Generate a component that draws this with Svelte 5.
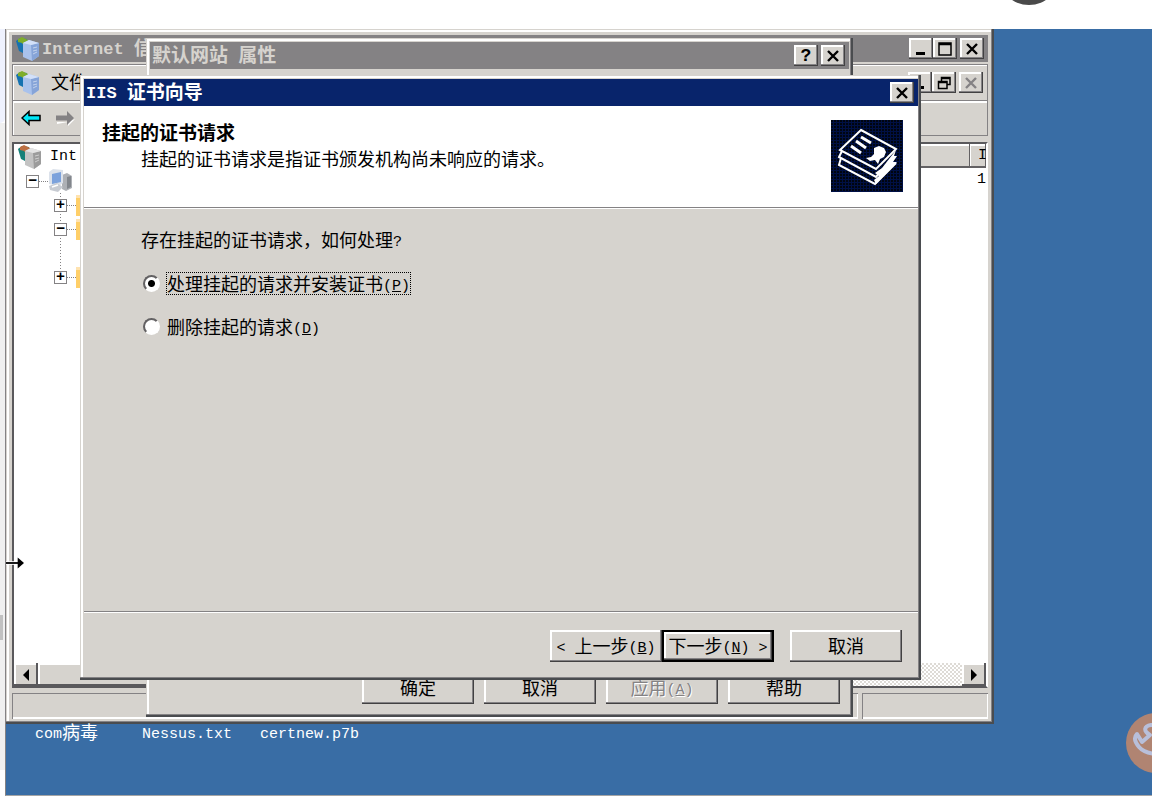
<script lang="ts">
	type TreeNode = { id: number; open: boolean; tall?: boolean };

	const folders: TreeNode[] = [
		{ id: 1, open: false },
		{ id: 2, open: true, tall: true },
		{ id: 3, open: false }
	];
	const desktopFiles = [
		{ latin: 'com', cjk: '病毒' },
		{ latin: 'Nessus.txt', cjk: '' },
		{ latin: 'certnew.p7b', cjk: '' }
	];

	let choice = $state('process');
</script>

{#snippet cross()}
	<svg class="glyph" viewBox="0 0 14 14" aria-hidden="true">
		<path d="M2 2L12 12M12 2L2 12" stroke="currentColor" stroke-width="2.4" />
	</svg>
{/snippet}

{#snippet server(color: string)}
	<svg class="server" viewBox="0 0 24 24" aria-hidden="true">
		<path d="M0 4l4-3 7 1 2 11-4 4-6-3z" fill={color === 'blue' ? '#1572b0' : '#158078'} />
		<path d="M2 2l4-2 6 3-1 5-3 1-2-3-4-1z" fill={color === 'blue' ? '#7fae2b' : '#bd7043'} />
		<path d="M7 6l6-3 10 3v13l-7 5-9-4z" fill={color === 'blue' ? '#a9c2ec' : '#c3c3c3'} />
		<path d="M15 8l8-2v13l-7 5z" fill={color === 'blue' ? '#86a4d8' : '#9c9c9c'} />
		<path d="M7 6l6-3 10 3-8 2z" fill={color === 'blue' ? '#d3e0f8' : '#e4e4e4'} />
		<path d="M17 11l4-1M17 14l4-1M17 17l4-2" stroke="#fff" stroke-width="1" opacity="0.5" />
	</svg>
{/snippet}

<div class="page">
	<header class="page-top">
		<svg class="page-dot" viewBox="0 0 36 5" aria-hidden="true">
			<circle cx="18" cy="-26" r="31" fill="#4a4a4a" />
		</svg>
	</header>

	<div class="page-side">
		<div class="side-tint"></div>
		<div class="side-track"><div class="side-thumb"></div></div>
	</div>

	<main class="desktop">
		<section class="window console">
			<div class="titlebar inactive console-title">
				{@render server('blue')}
				<h2><span class="latin-bold">{'Internet '}</span>信</h2>
				<div class="title-buttons">
					<button type="button" class="caption" aria-label="最小化">
						<svg class="glyph" viewBox="0 0 14 14"><path d="M2 11.5h9" stroke="#000" stroke-width="3" /></svg>
					</button>
					<button type="button" class="caption" aria-label="最大化">
						<svg class="glyph" viewBox="0 0 14 14"><path d="M1 1h12v12H1zM1 2.5h12" fill="none" stroke="#000" stroke-width="1.5" /></svg>
					</button>
					<button type="button" class="caption apart" aria-label="关闭">{@render cross()}</button>
				</div>
			</div>

			<div class="rebar">
				<div class="menu-row">
					{@render server('blue')}
					<span>文件</span>
					<div class="mdi-buttons">
						<button type="button" class="caption" aria-label="最小化">
							<svg class="glyph" viewBox="0 0 14 14"><path d="M2 11.5h9" stroke="#000" stroke-width="3" /></svg>
						</button>
						<button type="button" class="caption" aria-label="还原">
							<svg class="glyph" viewBox="0 0 14 14">
								<path d="M4.5 5V1.5H13V8.5H10M4.5 2.5H13M1.5 5.5H10V12.5H1.5zM1.5 6.5H10" fill="none" stroke="#000" stroke-width="1.5" />
							</svg>
						</button>
						<button type="button" class="caption apart muted" aria-label="关闭" disabled>{@render cross()}</button>
					</div>
				</div>
				<div class="tool-row">
					<svg class="arrow" viewBox="0 0 20 16" aria-hidden="true">
						<path d="M1 8L8 1.5V5.5H19V10.5H8V14.5z" fill="#00e8f8" stroke="#000" stroke-width="1.5" />
					</svg>
					<svg class="arrow" viewBox="0 0 20 16" aria-hidden="true">
						<path d="M20 9L13 16V12H2V14L13 12z" fill="#fff" />
						<path d="M19 8L12 1V5.5H1V10.5H12V15z" fill="#848284" />
					</svg>
				</div>
			</div>

			<div class="console-body">
				<div class="panes">
					<div class="tree">
						<div class="tree-root">
							{@render server('grey')}
							<span class="latin">Int</span>
						</div>
						<div class="tree-row computer-row">
							<span class="box">−</span><span class="dots"></span>
							<svg class="server" viewBox="0 0 24 24" aria-hidden="true">
								<path d="M14 6l5-2 5 3v12l-6 3-4-2z" fill="#adb0b5" />
								<path d="M19 8l4-1v11l-4 2z" fill="#82868c" />
								<path d="M1 3l4-3 10 1v13l-4 3-10-2z" fill="#dce2eb" />
								<path d="M4 5l9-2v10l-9 2z" fill="#7ca2dc" />
								<path d="M1 17l8-3 6 4-5 5-8-2z" fill="#c7cbd2" />
								<path d="M4 18l6-2" stroke="#fff" stroke-width="1.5" />
							</svg>
						</div>
						<div class="branch">
							{#each folders as node (node.id)}
								<div class="tree-row" class:tall={node.tall}>
									<span class="box">{node.open ? '−' : '+'}</span><span class="dots"></span>
									<span class="folder"></span>
								</div>
							{/each}
						</div>
					</div>
					<div class="list">
						<div class="list-head">
							<span class="column"></span>
							<span class="column last latin">I</span>
						</div>
						<div class="list-row latin">1</div>
					</div>
				</div>
				<div class="scrollbar">
					<button type="button" class="scroll-button" aria-label="向左">
						<svg viewBox="0 0 8 12"><path d="M7 0v12L1 6z" /></svg>
					</button>
					<div class="scroll-thumb"></div>
					<div class="scroll-track"></div>
					<button type="button" class="scroll-button" aria-label="向右">
						<svg viewBox="0 0 8 12"><path d="M1 0v12l6-6z" /></svg>
					</button>
				</div>
			</div>
			<div class="status">
				<div class="status-cell"></div>
				<div class="status-cell short"></div>
			</div>
		</section>

		<section class="window properties">
			<div class="titlebar inactive">
				<h2>默认网站<span class="latin-bold">{' '}</span>属性</h2>
				<div class="title-buttons">
					<button type="button" class="caption help" aria-label="帮助">?</button>
					<button type="button" class="caption apart" aria-label="关闭">{@render cross()}</button>
				</div>
			</div>
			<div class="sheet-buttons">
				<button type="button" class="push">确定</button>
				<button type="button" class="push">取消</button>
				<button type="button" class="push" disabled>应用<span class="latin">(<u>A</u>)</span></button>
				<button type="button" class="push">帮助</button>
			</div>
		</section>

		<section class="window wizard">
			<div class="titlebar active">
				<h1><span class="latin-bold">{'IIS '}</span>证书向导</h1>
				<div class="title-buttons">
					<button type="button" class="caption" aria-label="关闭">{@render cross()}</button>
				</div>
			</div>
			<div class="banner">
				<div class="banner-text">
					<h2>挂起的证书请求</h2>
					<p>挂起的证书请求是指证书颁发机构尚未响应的请求。</p>
				</div>
				<svg class="certificate" viewBox="0 0 72 72" aria-hidden="true">
					<defs>
						<pattern id="weave" width="3" height="3" patternUnits="userSpaceOnUse">
							<rect width="3" height="3" fill="#001045" />
							<rect width="2" height="2" fill="#000510" />
						</pattern>
					</defs>
					<rect width="72" height="72" fill="url(#weave)" />
					<path d="M51 48L65 30L63 36L66 36L62 42L66 42L45 64L43 60L48 56L44 53z" fill="#fff" />
					<g fill="none" stroke="#fff" stroke-width="2">
						<path d="M30 10L65 29L45 49L9 30z" />
						<path d="M11 31L8 37L45 57L50 51" />
						<path d="M10 38L8 45L44 64L65 43" />
					</g>
					<g stroke="#fff" stroke-width="3">
						<path d="M30 17L40 23M25 21L35 28M20 26L30 33" />
					</g>
					<path d="M43 28l5-2 5 2 2 4-2 5-4 2-2 5-3-4-5 1-4-3 5-1 3-3z" fill="#fff" />
				</svg>
			</div>
			<div class="wizard-body">
				<p id="question">存在挂起的证书请求，如何处理<span class="latin">?</span></p>
				<div class="options" role="radiogroup" aria-labelledby="question">
					<label class="option">
						<input type="radio" name="pending" value="process" bind:group={choice} />
						<span class="option-text" class:focused={choice === 'process'}>处理挂起的请求并安装证书<span class="latin">(<u>P</u>)</span></span>
					</label>
					<label class="option">
						<input type="radio" name="pending" value="delete" bind:group={choice} />
						<span class="option-text" class:focused={choice === 'delete'}>删除挂起的请求<span class="latin">(<u>D</u>)</span></span>
					</label>
				</div>
			</div>
			<div class="wizard-buttons">
				<button type="button" class="push"><span class="latin">{'< '}</span>上一步<span class="latin">(<u>B</u>)</span></button>
				<button type="button" class="push default">下一步<span class="latin">(<u>N</u>) &gt;</span></button>
				<button type="button" class="push cancel">取消</button>
			</div>
		</section>

		<div class="desktop-files">
			{#each desktopFiles as file (file.latin)}
				<span><span class="latin">{file.latin}</span>{file.cjk}</span>
			{/each}
		</div>

		<svg class="resize-cursor" viewBox="0 0 20 14" aria-hidden="true">
			<path d="M0 7H14" stroke="#fff" stroke-width="4" />
			<path d="M0 7H14" stroke="#000" stroke-width="2" />
			<path d="M13 1L20 7L13 13z" fill="#000" />
		</svg>

		<button type="button" class="floating" aria-label="工具">
			<svg viewBox="0 0 40 40" aria-hidden="true">
				<path d="M40 29C27 33 13 31 7 24C2 18 2 14 5 11L10 19L18 12C11 8 12 3 19 2C26 1 31 6 33 12L24 20" fill="none" stroke="#b8bfda" stroke-width="4" stroke-linejoin="round" />
			</svg>
		</button>
	</main>
</div>

<style>
	:global(body) {
		margin: 0;
		background: #ffffff;
	}

	.page {
		height: 100vh;
		min-height: 760px;
		display: grid;
		grid-template-columns: 5px 1fr;
		grid-template-rows: 29px 1fr 2px;
		overflow: hidden;
		font-family: 'Noto Sans CJK SC', sans-serif;
		font-size: 18px;
		line-height: 24px;
		color: #000000;
	}

	h1,
	h2,
	p {
		margin: 0;
		font-weight: 400;
		white-space: nowrap;
	}

	button {
		font: inherit;
		color: inherit;
		padding: 0;
		border: none;
		background: #d6d3ce;
	}

	.latin {
		font-family: 'Liberation Mono', monospace;
		font-size: 15px;
		line-height: 15px;
		vertical-align: 1px;
		white-space: pre;
	}

	.latin-bold {
		font-family: 'Liberation Mono', monospace;
		font-size: 17px;
		line-height: 17px;
		vertical-align: 1px;
		white-space: pre;
	}

	.page-top {
		grid-column: 1 / -1;
		display: flex;
		justify-content: flex-end;
		padding-right: 105px;
	}

	.page-dot {
		width: 36px;
		height: 5px;
	}

	.page-side {
		display: flex;
		flex-direction: column;
		padding-bottom: 26px;
	}

	.side-tint {
		height: 94px;
		background: #eff2fe;
		border-radius: 0 0 5px 0;
	}

	.side-track {
		flex: 1;
		padding-top: 492px;
		background: #f0f0f0;
	}

	.side-thumb {
		width: 3px;
		height: 25px;
		background: #c1c1c1;
	}

	.desktop {
		position: relative;
		background: #396da5;
		border-left: 1px solid #848284;
		border-bottom: 1px solid #a5a5a5;
		overflow: hidden;
	}

	.window {
		position: absolute;
		box-sizing: border-box;
		display: flex;
		flex-direction: column;
		background: #d6d3ce;
		box-shadow:
			inset -2px -2px 0 #4a4c4f,
			inset -3px -3px 0 #848284,
			inset 1px 1px 0 #d6d3ce,
			inset 3px 3px 0 #ffffff;
		overflow: hidden;
	}

	.titlebar {
		display: flex;
		align-items: center;
		height: 27px;
		flex-shrink: 0;
		padding: 0 4px 0 2px;
	}

	.titlebar h1,
	.titlebar h2 {
		padding-bottom: 4px;
		font-size: 19px;
		font-weight: 700;
	}

	.inactive {
		background: #848284;
		color: #d6d3ce;
	}

	.active {
		background: #08246b;
		color: #ffffff;
	}

	.title-buttons,
	.mdi-buttons {
		display: flex;
		margin-left: auto;
	}

	.caption {
		display: flex;
		align-items: center;
		justify-content: center;
		width: 24px;
		height: 21px;
		color: #000000;
		box-shadow:
			inset -1px -1px 0 #424142,
			inset -2px -2px 0 #848284,
			inset 2px 2px 0 #ffffff;
	}

	.apart {
		margin-left: 3px;
	}

	.muted {
		color: #848284;
	}

	.help {
		font-family: 'Liberation Mono', monospace;
		font-weight: 700;
	}

	.glyph {
		width: 14px;
		height: 14px;
	}

	.server {
		width: 24px;
		height: 24px;
		flex-shrink: 0;
	}

	.console {
		top: 0;
		left: 0;
		right: 158px;
		bottom: 71px;
		padding: 6px 6px 5px;
	}

	.console-title {
		padding-left: 4px;
	}

	.console-title h2 {
		padding-left: 2px;
	}

	.rebar {
		margin-top: 2px;
		border: 1px solid #848284;
		box-shadow: inset 1px 1px 0 #ffffff;
	}

	.menu-row {
		display: flex;
		align-items: center;
		height: 35px;
		padding: 0 4px 0 3px;
		border-bottom: 1px solid #848284;
	}

	.menu-row > span {
		padding: 0 0 3px 11px;
	}

	.tool-row {
		display: flex;
		align-items: center;
		gap: 14px;
		height: 34px;
		padding-left: 8px;
		box-shadow: inset 1px 2px 0 #ffffff;
	}

	.arrow {
		width: 20px;
		height: 16px;
	}

	.console-body {
		flex: 1;
		display: flex;
		flex-direction: column;
		min-height: 0;
		margin-top: 6px;
		border: 2px solid #5a595c;
		border-right-color: #ffffff;
	}

	.panes {
		flex: 1;
		display: flex;
		min-height: 0;
		background: #ffffff;
	}

	.tree {
		flex: 1;
		padding-left: 4px;
	}

	.tree-root {
		display: flex;
		align-items: center;
		gap: 8px;
		height: 25px;
	}

	.tree-row {
		display: flex;
		align-items: center;
		height: 24px;
	}

	.computer-row {
		padding-left: 8px;
	}

	.branch {
		width: 64px;
		padding-left: 36px;
		overflow: hidden;
	}

	.tree-row.tall {
		padding-bottom: 24px;
	}

	.branch .tree-row {
		background: repeating-linear-gradient(#848284 0 1px, #ffffff 1px 3px) 6px 0 / 1px 100% no-repeat;
	}

	.branch .tree-row:last-child {
		background-size: 1px 12px;
	}

	.box {
		box-sizing: border-box;
		width: 13px;
		height: 13px;
		flex-shrink: 0;
		border: 1px solid #848284;
		background: #ffffff;
		font-family: 'Liberation Mono', monospace;
		font-size: 15px;
		font-weight: 700;
		line-height: 11px;
		text-align: center;
	}

	.dots {
		width: 9px;
		flex-shrink: 0;
		border-top: 1px dotted #848284;
	}

	.folder {
		width: 24px;
		height: 18px;
		flex-shrink: 0;
		background: #ffcf68;
		border-top: 3px solid #ffe3b0;
	}

	.list {
		width: 110px;
		overflow: hidden;
	}

	.list-head {
		display: flex;
		height: 24px;
	}

	.column {
		box-sizing: border-box;
		flex: 1;
		background: #d6d3ce;
		box-shadow:
			inset -1px -2px 0 #636163,
			inset 1px 2px 0 #ffffff;
	}

	.column.last {
		flex: 0 0 16px;
		padding-left: 8px;
		line-height: 24px;
		overflow: hidden;
	}

	.list-row {
		line-height: 24px;
		text-align: right;
	}

	.scrollbar {
		display: flex;
		height: 23px;
	}

	.scroll-button,
	.scroll-thumb {
		background: #d6d3ce;
		box-shadow:
			inset -2px -2px 0 #5a595c,
			inset 2px 2px 0 #ffffff;
	}

	.scroll-button {
		display: flex;
		align-items: center;
		justify-content: center;
		width: 24px;
	}

	.scroll-button svg {
		width: 8px;
		height: 12px;
	}

	.scroll-thumb {
		width: 400px;
	}

	.scroll-track {
		flex: 1;
		background: repeating-conic-gradient(#ffffff 0 25%, #dedbd6 0 50%) 0 0 / 4px 4px;
	}

	.status {
		display: flex;
		gap: 4px;
		height: 26px;
		margin-top: 5px;
	}

	.status-cell {
		flex: 1;
		box-shadow:
			inset 1px 1px 0 #848284,
			inset -1px -2px 0 #ffffff;
	}

	.status-cell.short {
		flex: 0 0 126px;
	}

	.properties {
		top: 9px;
		left: 140px;
		right: 299px;
		bottom: 78px;
		padding: 4px;
		justify-content: space-between;
	}

	.sheet-buttons {
		display: flex;
		justify-content: flex-end;
		gap: 10px;
		padding: 0 9px 9px;
	}

	.push {
		width: 112px;
		height: 32px;
		padding-bottom: 3px;
		white-space: nowrap;
		box-shadow:
			inset -1px -1px 0 #424142,
			inset -2px -2px 0 #848284,
			inset 2px 2px 0 #ffffff;
	}

	.push:disabled {
		color: #848284;
		text-shadow: 1px 1px 0 #ffffff;
	}

	.push.default {
		border: 2px solid #000000;
	}

	.wizard {
		top: 46px;
		left: 74px;
		right: 231px;
		bottom: 115px;
		padding: 4px 3px 4px 4px;
	}

	.banner {
		display: flex;
		justify-content: space-between;
		height: 101px;
		flex-shrink: 0;
		padding: 0 15px 0 18px;
		background: #ffffff;
		border-bottom: 1px solid #848284;
	}

	.banner h2 {
		padding-top: 12px;
		font-size: 19px;
		font-weight: 700;
		line-height: 28px;
	}

	.banner p {
		padding-left: 39px;
	}

	.certificate {
		width: 72px;
		height: 72px;
		margin-top: 14px;
	}

	.wizard-body {
		flex: 1;
		padding: 18px 0 0 57px;
		border-top: 1px solid #ffffff;
		border-bottom: 1px solid #848284;
	}

	.options {
		display: flex;
		flex-direction: column;
		align-items: flex-start;
		gap: 19px;
		padding: 20px 0 0 2px;
	}

	.option {
		display: flex;
		align-items: center;
		gap: 6px;
		height: 24px;
	}

	.option input {
		appearance: none;
		width: 17px;
		height: 17px;
		margin: 0;
		border: 2px solid;
		border-color: #636163 #ffffff #ffffff #636163;
		border-radius: 50%;
		background: #ffffff;
	}

	.option input:checked {
		background: radial-gradient(circle, #000000 3px, #ffffff 4px);
	}

	.option-text {
		height: 21px;
		line-height: 20px;
		border: 1px solid transparent;
		white-space: nowrap;
	}

	.option-text.focused {
		border: 1px dotted #000000;
	}

	.wizard-buttons {
		display: flex;
		justify-content: flex-end;
		padding: 17px 16px 14px;
		border-top: 1px solid #ffffff;
	}

	.cancel {
		margin-left: 16px;
	}

	.desktop-files {
		position: absolute;
		left: 29px;
		bottom: 52px;
		display: grid;
		grid-template-columns: 107px 118px auto;
		color: #ffffff;
	}

	.resize-cursor {
		position: absolute;
		top: 527px;
		left: 0;
		width: 18px;
		height: 14px;
	}

	.floating {
		position: absolute;
		right: -34px;
		bottom: 22px;
		width: 60px;
		height: 60px;
		border-radius: 50%;
		background: #b08472;
	}

	.floating svg {
		display: block;
		width: 40px;
		height: 40px;
		margin-left: 6px;
	}
</style>
